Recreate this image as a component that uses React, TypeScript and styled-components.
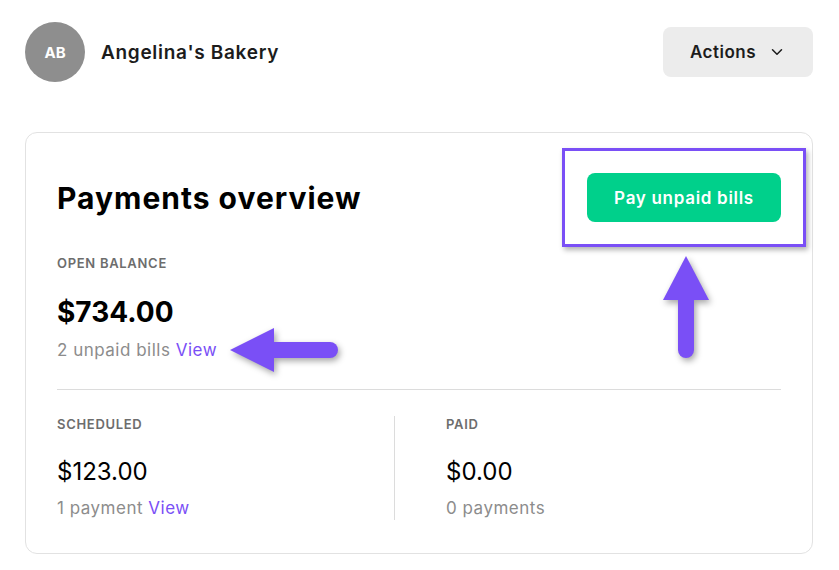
import React from "react";
import styled, { createGlobalStyle } from "styled-components";
import { ChevronDown } from "lucide-react";

const PURPLE = "#7a4ff6";

const GlobalStyle = createGlobalStyle`
  html, body {
    margin: 0;
    padding: 0;
    background: #fff;
  }
  body {
    font-family: Inter, "Noto Sans", sans-serif;
    color: #111;
  }
`;

const Page = styled.div`
  padding: 22px 26px 0 25px;
  width: 839px;
  box-sizing: border-box;
`;

const TopBar = styled.header`
  display: flex;
  align-items: center;
  justify-content: space-between;
  height: 60px;
  margin-bottom: 50px;
`;

const Business = styled.div`
  display: flex;
  align-items: center;
  gap: 16px;
`;

const Avatar = styled.div`
  width: 60px;
  height: 60px;
  border-radius: 50%;
  background: #8e8e8e;
  color: #fff;
  display: flex;
  align-items: center;
  justify-content: center;
  font-size: 15px;
  font-weight: 700;
`;

const BusinessName = styled.h2`
  margin: 0;
  font-size: 19px;
  font-weight: 600;
  letter-spacing: 0.7px;
  color: #1c1c1c;
`;

const ActionsButton = styled.button`
  width: 150px;
  height: 50px;
  border: none;
  border-radius: 8px;
  background: #ececec;
  font-family: inherit;
  font-size: 17px;
  font-weight: 600;
  letter-spacing: 0.5px;
  color: #1c1c1c;
  display: flex;
  align-items: center;
  justify-content: center;
  gap: 12px;
`;

const Card = styled.section`
  position: relative;
  border: 1px solid #e2e2e2;
  border-radius: 12px;
  padding: 40px 31px 33px 31px;
`;

const CardHeader = styled.div`
  display: flex;
  align-items: center;
  justify-content: space-between;
  height: 49px;
  margin-bottom: 33px;
`;

const Title = styled.h1`
  margin: 0;
  font-size: 30px;
  font-weight: 700;
  letter-spacing: 1px;
  color: #000;
`;

const Highlight = styled.div`
  margin: -25px -25px -25px 0;
  padding: 22px;
  border: 3px solid ${PURPLE};
  box-shadow: 2px 3px 5px rgba(0, 0, 0, 0.3);
`;

const PayButton = styled.button`
  width: 194px;
  height: 49px;
  border: none;
  border-radius: 8px;
  background: #00d08b;
  color: #fff;
  font-family: inherit;
  font-size: 17px;
  font-weight: 600;
  letter-spacing: 0.7px;
  display: block;
`;

const Label = styled.div`
  font-size: 13px;
  line-height: 16px;
  font-weight: 600;
  letter-spacing: 0.7px;
  color: #6d6d6d;
  text-transform: uppercase;
`;

const Amount = styled.div<{ $big?: boolean }>`
  font-size: ${(p) => (p.$big ? "28px" : "24px")};
  font-weight: ${(p) => (p.$big ? 700 : 400)};
  line-height: ${(p) => (p.$big ? "34px" : "30px")};
  margin-top: ${(p) => (p.$big ? "24px" : "25px")};
  color: #000;
`;

const Meta = styled.div<{ $gap: number }>`
  font-size: 17px;
  line-height: 24px;
  letter-spacing: 0.5px;
  color: #8c8c8c;
  margin-top: ${(p) => p.$gap}px;
`;

const ViewLink = styled.a`
  color: ${PURPLE};
  text-decoration: none;
`;

const Divider = styled.hr`
  border: none;
  border-top: 1px solid #dcdcdc;
  margin: 27px 0 26px;
`;

const Columns = styled.div`
  display: grid;
  grid-template-columns: 337px 1fr;
`;

const Column = styled.div<{ $split?: boolean }>`
  padding-left: ${(p) => (p.$split ? "51px" : "0")};
  border-left: ${(p) => (p.$split ? "1px solid #dcdcdc" : "none")};
`;

const Pointer = styled.svg`
  position: absolute;
  overflow: visible;
  filter: drop-shadow(2px 3px 3px rgba(0, 0, 0, 0.35));
`;

const UpArrow = () => (
  <Pointer
    width="46"
    height="102"
    viewBox="0 0 46 102"
    style={{ left: 637, top: 123 }}
  >
    <polygon points="23,0 0,44 46,44" fill={PURPLE} />
    <path d="M15 40 H31 V94 A8 8 0 0 1 15 94 Z" fill={PURPLE} />
  </Pointer>
);

const LeftArrow = () => (
  <Pointer
    width="108"
    height="44"
    viewBox="0 0 108 44"
    style={{ left: 204, top: 195 }}
  >
    <polygon points="0,22 44,0 44,44" fill={PURPLE} />
    <path d="M40 14 H100 A8 8 0 0 1 100 30 H40 Z" fill={PURPLE} />
  </Pointer>
);

export default function App() {
  return (
    <>
      <GlobalStyle />
      <Page>
        <TopBar>
          <Business>
            <Avatar>AB</Avatar>
            <BusinessName>Angelina's Bakery</BusinessName>
          </Business>
          <ActionsButton>
            Actions
            <ChevronDown size={18} strokeWidth={2} />
          </ActionsButton>
        </TopBar>

        <Card>
          <CardHeader>
            <Title>Payments overview</Title>
            <Highlight>
              <PayButton>Pay unpaid bills</PayButton>
            </Highlight>
          </CardHeader>

          <Label>Open balance</Label>
          <Amount $big>$734.00</Amount>
          <Meta $gap={9}>
            2 unpaid bills <ViewLink href="#">View</ViewLink>
          </Meta>

          <Divider />

          <Columns>
            <Column>
              <Label>Scheduled</Label>
              <Amount>$123.00</Amount>
              <Meta $gap={9}>
                1 payment <ViewLink href="#">View</ViewLink>
              </Meta>
            </Column>
            <Column $split>
              <Label>Paid</Label>
              <Amount>$0.00</Amount>
              <Meta $gap={9}>0 payments</Meta>
            </Column>
          </Columns>

          <UpArrow />
          <LeftArrow />
        </Card>
      </Page>
    </>
  );
}
